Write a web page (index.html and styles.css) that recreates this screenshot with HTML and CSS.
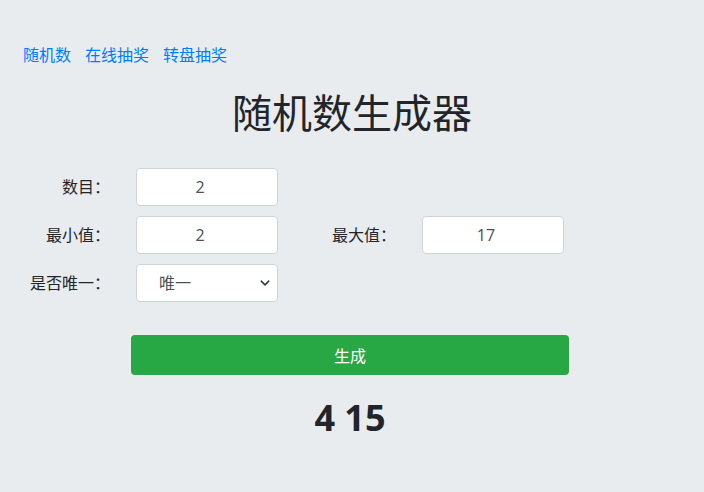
FILE: index.html
```html
<!DOCTYPE html>
<html lang="zh-CN">
<head>
    <meta charset="UTF-8">
    <meta name="viewport" content="width=device-width, initial-scale=1.0">
    <title>随机数生成器</title>
    <link rel="stylesheet" href="styles.css">
</head>
<body>

<nav class="nav">
    <a href="#">随机数</a>
    <a href="#">在线抽奖</a>
    <a href="#">转盘抽奖</a>
</nav>

<h1 class="title">随机数生成器</h1>

<form class="form">
    <label class="label" for="count">数目：</label>
    <input class="field" id="count" type="text" value="2">
    <span></span><span></span>

    <label class="label" for="min">最小值：</label>
    <input class="field" id="min" type="text" value="2">
    <label class="label" for="max">最大值：</label>
    <input class="field" id="max" type="text" value="17">

    <label class="label" for="unique">是否唯一：</label>
    <div class="select-wrap">
        <select class="field select" id="unique">
            <option>唯一</option>
            <option>可重复</option>
        </select>
        <svg class="chevron" width="10" height="10" viewBox="0 0 16 16">
            <path d="M2 5l6 6 6-6" fill="none" stroke="#343a40" stroke-width="2.4" stroke-linecap="round" stroke-linejoin="round"/>
        </svg>
    </div>
</form>

<button class="generate" type="button">生成</button>

<div class="result">4 15</div>

</body>
</html>
```

FILE: styles.css
```css
body {
    font-family: "Open Sans", "Noto Sans CJK SC", sans-serif;
    background-color: #e9ecef;
    color: #212529;
    margin: 0;
    padding: 0;
    font-size: 16px;
}
.nav {
    display: flex;
    gap: 14px;
    padding: 44px 0 0 23px;
    line-height: 22px;
}
.nav a {
    color: #007bff;
    text-decoration: none;
}
.title {
    font-family: "Noto Sans CJK SC", sans-serif;
    font-weight: 400;
    font-size: 40px;
    line-height: 48px;
    text-align: center;
    margin: 21px 0 33px;
}
.form {
    display: grid;
    grid-template-columns: 126px 142px 144px 142px;
    row-gap: 10px;
    padding-left: 10px;
}
.label {
    text-align: right;
    padding-right: 26px;
    line-height: 38px;
}
.field {
    box-sizing: border-box;
    width: 142px;
    height: 38px;
    border: 1px solid #ced4da;
    border-radius: 4px;
    background: #fff;
    color: #495057;
    font-family: "Open Sans", "Noto Sans CJK SC", sans-serif;
    font-size: 16px;
    text-align: center;
    padding: 0 26px 0 12px;
}
.select-wrap {
    position: relative;
}
.select {
    appearance: none;
    text-align: left;
    padding-left: 22px;
}
.chevron {
    position: absolute;
    right: 8px;
    top: 14px;
    pointer-events: none;
}
.generate {
    display: block;
    width: 438px;
    height: 40px;
    margin: 33px 0 0 131px;
    border: none;
    border-radius: 4px;
    background-color: #28a745;
    color: #fff;
    font-family: "Open Sans", "Noto Sans CJK SC", sans-serif;
    font-size: 16px;
}
.result {
    text-align: center;
    font-size: 36px;
    font-weight: 700;
    line-height: 44px;
    margin: 21px 0 0 -4px;
}
```
